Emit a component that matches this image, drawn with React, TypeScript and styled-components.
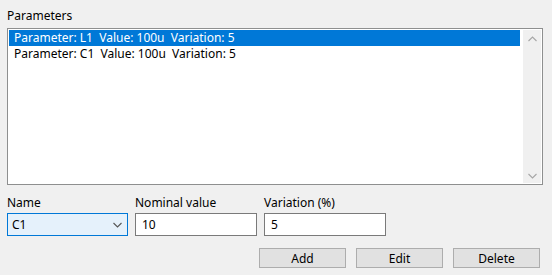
import React from "react";
import styled, { createGlobalStyle } from "styled-components";

const Global = createGlobalStyle`
  html, body { margin: 0; padding: 0; background: #f0f0f0; }
  body { font-family: "Noto Sans", "Open Sans", sans-serif; font-size: 12px; color: #000; }
`;

const Window = styled.div`
  width: 552px;
  height: 275px;
  box-sizing: border-box;
  padding: 8px 9px 0 7px;
  background: #f0f0f0;
  display: flex;
  flex-direction: column;
`;

const GroupLabel = styled.div`
  height: 16px;
  line-height: 16px;
  margin-bottom: 4px;
`;

const ListBox = styled.div`
  height: 157px;
  box-sizing: border-box;
  border: 1px solid #8e8f8f;
  background: #fff;
  display: flex;
  padding: 1px;
`;

const Rows = styled.div`
  flex: 1;
  display: flex;
  flex-direction: column;
`;

const Row = styled.div<{ $selected?: boolean }>`
  height: 16px;
  line-height: 16px;
  padding-left: 5px;
  white-space: pre;
  background: ${(p) => (p.$selected ? "#0078d7" : "transparent")};
  color: ${(p) => (p.$selected ? "#fff" : "#000")};
`;

const ScrollBar = styled.div`
  width: 18px;
  margin-left: 3px;
  background: #f0f0f0;
  display: flex;
  flex-direction: column;
  justify-content: space-between;
  align-items: center;
  padding: 6px 0 4px;
`;

const Fields = styled.div`
  margin-top: 10px;
  display: flex;
  gap: 7px;
`;

const Field = styled.div<{ $w: number }>`
  width: ${(p) => p.$w}px;
  display: flex;
  flex-direction: column;
`;

const FieldLabel = styled.div`
  height: 16px;
  line-height: 16px;
  margin-bottom: 2px;
`;

const Combo = styled.div`
  height: 23px;
  box-sizing: border-box;
  border: 1px solid #0078d7;
  background: #e5f1fb;
  display: flex;
  align-items: center;
  justify-content: space-between;
  padding: 0 5px 0 4px;
`;

const TextBox = styled.div`
  height: 23px;
  box-sizing: border-box;
  border: 1px solid #7a7a7a;
  background: #fff;
  display: flex;
  align-items: center;
  padding: 0 6px;
`;

const Buttons = styled.div`
  margin-top: 12px;
  display: flex;
  justify-content: flex-end;
  gap: 10px;
  padding-right: 3px;
`;

const Button = styled.div`
  width: 87px;
  height: 20px;
  box-sizing: border-box;
  border: 1px solid #adadad;
  background: #e1e1e1;
  display: flex;
  align-items: center;
  justify-content: center;
`;

const Chevron = ({ up, color = "#a6a6a6", w = 9 }: { up?: boolean; color?: string; w?: number }) => (
  <svg width={w} height={6} viewBox="0 0 9 6">
    <polyline
      points={up ? "0.5,5 4.5,1 8.5,5" : "0.5,1 4.5,5 8.5,1"}
      fill="none"
      stroke={color}
      strokeWidth={1.1}
    />
  </svg>
);

export default function App() {
  return (
    <>
      <Global />
      <Window>
        <GroupLabel>Parameters</GroupLabel>
        <ListBox>
          <Rows>
            <Row $selected>{"Parameter: L1  Value: 100u  Variation: 5"}</Row>
            <Row>{"Parameter: C1  Value: 100u  Variation: 5"}</Row>
          </Rows>
          <ScrollBar>
            <Chevron up />
            <Chevron />
          </ScrollBar>
        </ListBox>
        <Fields>
          <Field $w={121}>
            <FieldLabel>Name</FieldLabel>
            <Combo>
              <span>C1</span>
              <Chevron color="#555" w={9} />
            </Combo>
          </Field>
          <Field $w={122}>
            <FieldLabel>Nominal value</FieldLabel>
            <TextBox>10</TextBox>
          </Field>
          <Field $w={122}>
            <FieldLabel>Variation (%)</FieldLabel>
            <TextBox>5</TextBox>
          </Field>
        </Fields>
        <Buttons>
          <Button>Add</Button>
          <Button>Edit</Button>
          <Button>Delete</Button>
        </Buttons>
      </Window>
    </>
  );
}
